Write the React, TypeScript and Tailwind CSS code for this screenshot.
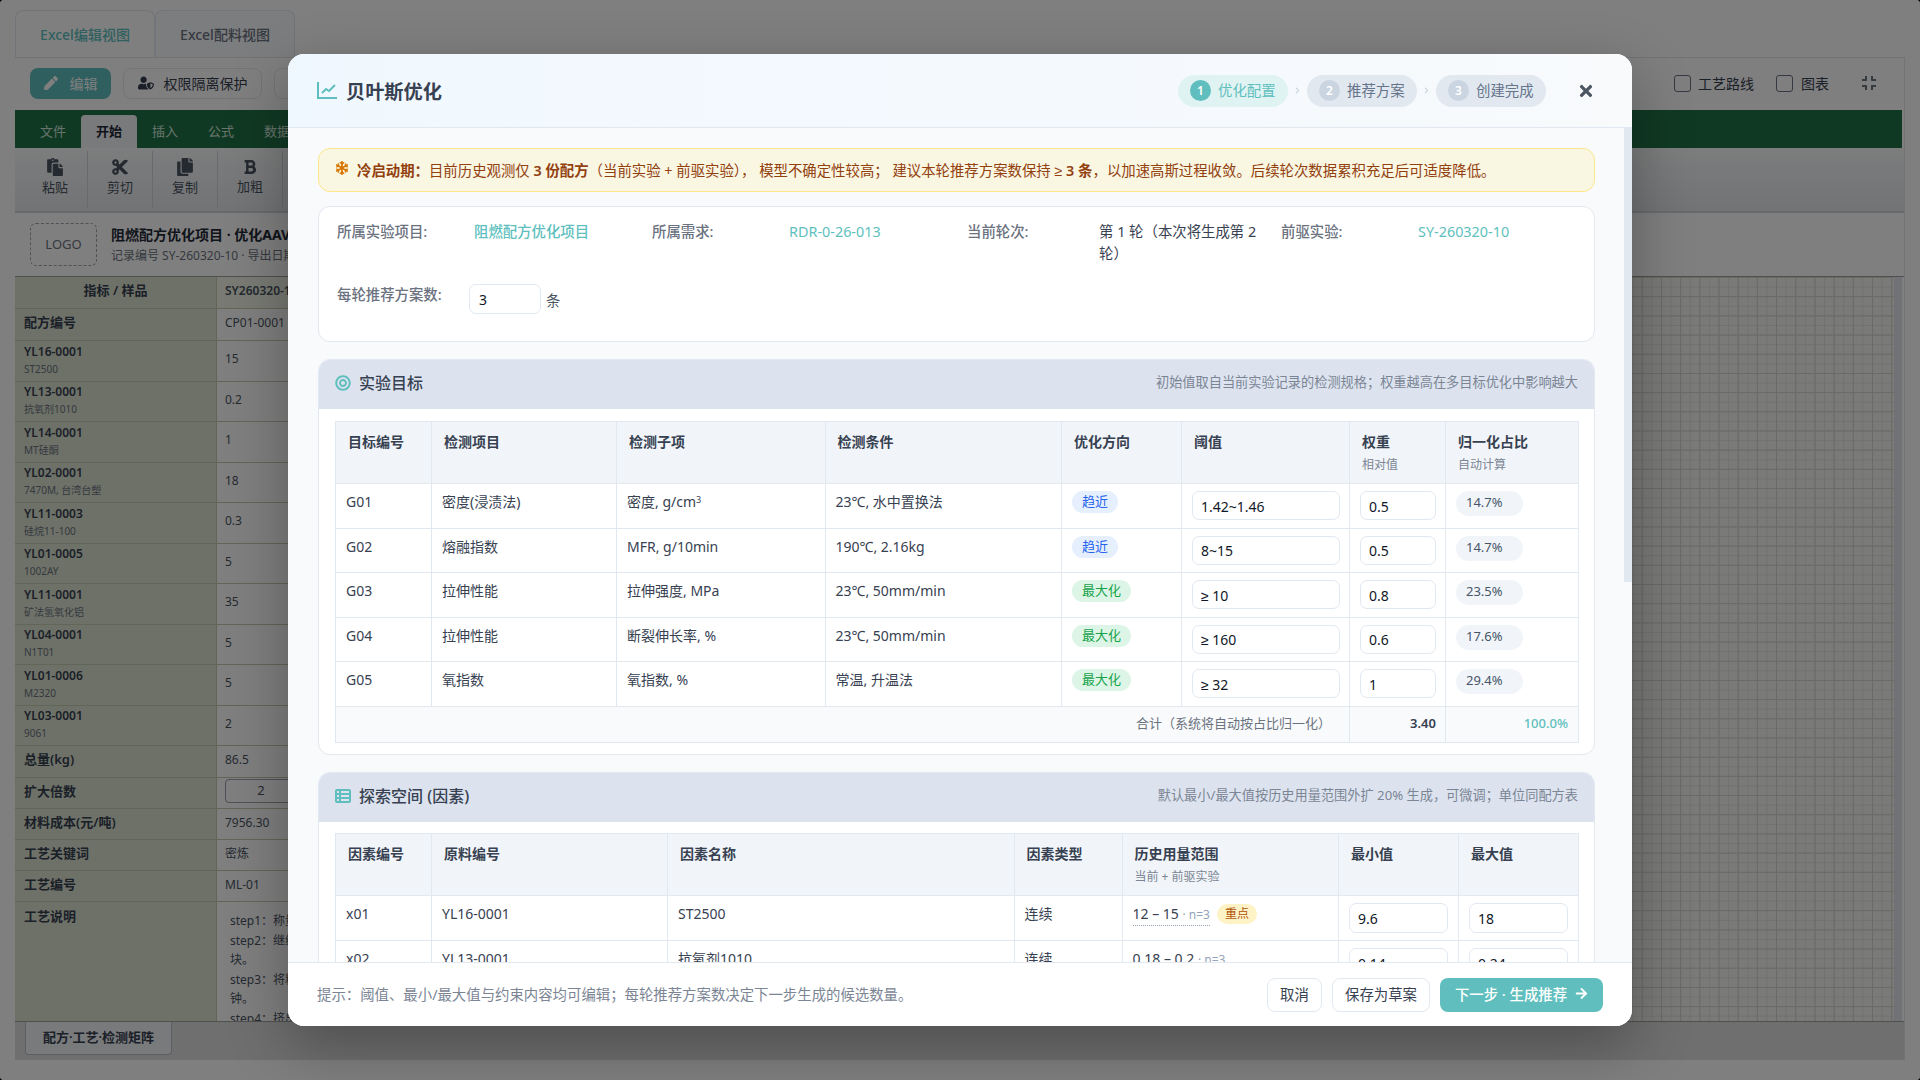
import React from "react";
import { FaPen, FaUserShield, FaPaste, FaCut, FaCopy, FaBold, FaCompress, FaSnowflake, FaBullseye, FaArrowRight, FaTimes, FaChevronRight } from "react-icons/fa";
import { FaTableList } from "react-icons/fa6";

const materials = [
  ["YL16-0001", "ST2500", "15"],
  ["YL13-0001", "抗氧剂1010", "0.2"],
  ["YL14-0001", "MT硅酮", "1"],
  ["YL02-0001", "7470M, 台湾台塑", "18"],
  ["YL11-0003", "硅烷11-100", "0.3"],
  ["YL01-0005", "1002AY", "5"],
  ["YL11-0001", "矿法氢氧化铝", "35"],
  ["YL04-0001", "N1T01", "5"],
  ["YL01-0006", "M2320", "5"],
  ["YL03-0001", "9061", "2"],
];

const goals = [
  ["G01", "密度(浸渍法)", "密度, g/cm", "23℃, 水中置换法", "趋近", "1.42~1.46", "0.5", "14.7%"],
  ["G02", "熔融指数", "MFR, g/10min", "190℃, 2.16kg", "趋近", "8~15", "0.5", "14.7%"],
  ["G03", "拉伸性能", "拉伸强度, MPa", "23℃, 50mm/min", "最大化", "≥ 10", "0.8", "23.5%"],
  ["G04", "拉伸性能", "断裂伸长率, %", "23℃, 50mm/min", "最大化", "≥ 160", "0.6", "17.6%"],
  ["G05", "氧指数", "氧指数, %", "常温, 升温法", "最大化", "≥ 32", "1", "29.4%"],
];

function Field({ value, className }: { value: string; className: string }) {
  return (
    <input
      readOnly
      value={value}
      className={`block rounded-[7px] border border-[#e2e8f0] bg-white px-2 pt-[1px] text-[14px] text-[#111827] outline-none ${className}`}
    />
  );
}

function Step({ n, label, active }: { n: number; label: string; active?: boolean }) {
  return (
    <div className={`flex h-8 w-[110px] items-center gap-[7px] rounded-full pl-3 ${active ? "bg-[#e0f3f3]" : "bg-[#e2e8f0]"}`}>
      <span className={`flex h-[21px] w-[21px] items-center justify-center rounded-full text-[12px] font-semibold text-white ${active ? "bg-[#60bfbe]" : "bg-[#cbd5e1]"}`}>{n}</span>
      <span className={`pt-[1px] text-[14.4px] ${active ? "text-[#60bfbe]" : "text-[#64748b]"}`}>{label}</span>
    </div>
  );
}

function Th({ title, sub }: { title: string; sub?: string }) {
  return (
    <th className="border border-[#e2e8f0] bg-[#f1f5f9] px-3 pt-[9px] text-left align-top font-normal">
      <div className="text-[14px] leading-[22px] font-semibold text-[#374151]">{title}</div>
      {sub && <div className="text-[12px] leading-[24px] text-[#7b8594]">{sub}</div>}
    </th>
  );
}

function Td({ children }: { children: React.ReactNode }) {
  return <td className="border border-[#e2e8f0] px-[10px] pt-[7px] align-top text-[14px] leading-[21px] text-[#374151]">{children}</td>;
}

function SectionHead({ icon, title, note }: { icon: React.ReactNode; title: string; note: string }) {
  return (
    <div className="flex h-[49px] items-center justify-between bg-[#dce3ef] px-4 pb-[3px]">
      <div className="flex items-center gap-2 text-[16px] font-medium text-[#374151]">
        {icon}
        <span>{title}</span>
      </div>
      <span className="text-[13.2px] text-[#7b8594]">{note}</span>
    </div>
  );
}

function Background() {
  const rowLine = "flex border-b border-[#c3ccb2]";
  const label = "flex w-[202px] shrink-0 flex-col justify-center border-r border-[#c3ccb2] bg-[#dce3d0] px-[9px] pb-[3px] text-[13px] font-semibold text-[#374151]";
  const value = "flex w-[120px] shrink-0 items-center px-2 pb-[3px] text-[12px] text-[#4b5563]";
  return (
    <div className="flex h-full flex-col pl-[15px] pr-[15px] pt-[10px] pb-5">
      <div className="flex h-[47px] shrink-0">
        <div className="flex w-[140px] items-center justify-center rounded-t-lg border border-b-0 border-[#e2e8f0] text-[14px] font-medium text-[#60bfbe]">Excel编辑视图</div>
        <div className="flex w-[140px] items-center justify-center rounded-t-lg border border-b-0 border-[#e2e8f0] bg-[#f8fafc] text-[14px] font-medium text-[#6b7280]">Excel配料视图</div>
      </div>
      <div className="flex min-h-0 flex-1 flex-col border-t border-r border-[#e5e7eb] bg-white">
        <div className="flex h-[52px] shrink-0 items-center px-[15px] pb-[2px]">
          <div className="flex h-[31px] w-[81px] items-center justify-center gap-3 rounded-lg bg-[#60bfbe] text-[14px] text-white"><FaPen size={14} />编辑</div>
          <div className="ml-3 flex h-[31px] w-[139px] items-center justify-center gap-[10px] rounded-lg border border-[#e2e8f0] text-[14px] text-[#374151]"><FaUserShield size={16} />权限隔离保护</div>
          <div className="ml-3 h-[31px] w-[100px] rounded-lg border border-[#e2e8f0]" />
          <div className="flex-1" />
          <div className="mr-[7px] h-[17px] w-[17px] rounded-[3px] border border-[#6b7280] bg-white" />
          <span className="text-[14px] text-[#374151]">工艺路线</span>
          <div className="ml-[22px] mr-2 h-[17px] w-[17px] rounded-[3px] border border-[#6b7280] bg-white" />
          <span className="text-[14px] text-[#374151]">图表</span>
          <FaCompress size={16} className="ml-[32px] mr-[12px] text-[#6b7280]" />
        </div>
        <div className="flex h-[38px] w-[1887px] shrink-0 items-end bg-[#217346] pl-[10px] text-[13px] text-[#d1e7da]">
          {["文件", "开始", "插入", "公式", "数据"].map((t) => (
            <div key={t} className={`flex h-[33px] w-14 items-center justify-center rounded-t ${t === "开始" ? "bg-[#f3f4f6] font-semibold text-[#1f2937]" : ""}`}>{t}</div>
          ))}
        </div>
        <div className="flex h-[65px] shrink-0 items-center border-b-2 border-[#d1d5db] bg-gradient-to-b from-[#f9fafb] to-[#e5e7eb] pl-2">
          {[[<FaPaste size={18} />, "粘贴"], [<FaCut size={18} />, "剪切"], [<FaCopy size={18} />, "复制"], [<FaBold size={16} />, "加粗"]].map(([ic, t], i) => (
            <div key={i} className="flex h-[57px] w-[65px] flex-col items-center justify-center gap-[2px] border-r border-[#d1d5db] pb-[3px] text-[13px] text-[#4b5563]">
              {ic}
              <span>{t}</span>
            </div>
          ))}
        </div>
        <div className="flex h-[63px] shrink-0 items-center gap-[14px] px-[15px]">
          <div className="flex h-[43px] w-[67px] items-center justify-center rounded-md border border-dashed border-[#9ca3af] text-[13px] text-[#6b7280]">LOGO</div>
          <div>
            <div className="text-[14px] leading-[22px] font-bold text-[#1f2937]">阻燃配方优化项目 · 优化AAV方案配方</div>
            <div className="text-[12px] leading-[20px] text-[#6b7280]">记录编号 SY-260320-10 · 导出日期 2026-03-20</div>
          </div>
        </div>
        <div className="flex min-h-0 flex-1 border-t border-[#9ca39a]">
          <div className="flex w-[322px] shrink-0 flex-col text-[#374151]">
            <div className={`${rowLine} h-[32px]`}><div className={`${label} items-center`}>指标 / 样品</div><div className={`${value} bg-[#f1f5e6] font-semibold`}>SY260320-10</div></div>
            <div className={`${rowLine} h-[32px]`}><div className={label}>配方编号</div><div className={value}>CP01-0001</div></div>
            {materials.map(([a, b, c]) => (
              <div key={a} className={`${rowLine} h-[40.5px]`}>
                <div className={label}><span className="text-[12px] leading-[17px]">{a}</span><span className="mt-[3px] text-[10px] leading-[13px] font-normal text-[#6b7280]">{b}</span></div>
                <div className={value}>{c}</div>
              </div>
            ))}
            <div className={`${rowLine} h-[31.5px]`}><div className={label}>总量(kg)</div><div className={value}>86.5</div></div>
            <div className={`${rowLine} h-[31.5px]`}><div className={label}>扩大倍数</div><div className={value}><div className="h-6 w-[72px] shrink-0 rounded border border-[#9ca3af] pt-[1px] text-center text-[13px]">2</div></div></div>
            <div className={`${rowLine} h-[31px]`}><div className={label}>材料成本(元/吨)</div><div className={value}>7956.30</div></div>
            <div className={`${rowLine} h-[31px]`}><div className={label}>工艺关键词</div><div className={value}>密炼</div></div>
            <div className={`${rowLine} h-[31px]`}><div className={label}>工艺编号</div><div className={value}>ML-01</div></div>
            <div className="flex min-h-0 flex-1 overflow-hidden">
              <div className={`${label} justify-start pt-[5px]`}>工艺说明</div>
              <div className="w-[120px] shrink-0 pl-[13px] pt-[9px] text-[12px] leading-[19.5px] text-[#4b5563]">step1：称量<br />step2：继续<br />块。<br />step3：将料<br />钟。<br />step4：挤出</div>
            </div>
          </div>
          <div className="min-w-0 flex-1 bg-[#f4f4f2] [background-image:linear-gradient(#d4d5cd_1px,transparent_1px),linear-gradient(90deg,#d4d5cd_1px,transparent_1px),linear-gradient(#e3e4de_1px,transparent_1px),linear-gradient(90deg,#e3e4de_1px,transparent_1px)] [background-size:19.2px_19.2px,19.2px_19.2px,9.6px_9.6px,9.6px_9.6px]" />
          <div className="w-2 shrink-0 bg-[#e2e5ea]" />
          <div className="w-[2px] shrink-0" />
        </div>
        <div className="flex h-[39px] shrink-0 border-t border-[#9ca39a] bg-[#dedede] pl-[10px]">
          <div className="flex h-[33px] w-[147px] items-center justify-center rounded-b border border-t-0 border-[#b9bdc4] bg-[#f3f4f6] text-[13px] font-semibold text-[#374151]">配方·工艺·检测矩阵</div>
        </div>
      </div>
    </div>
  );
}

export default function App() {
  return (
    <div className="h-screen overflow-hidden bg-black [font-family:'Noto_Sans','Liberation_Sans','Noto_Sans_CJK_SC',sans-serif]">
      <div className="relative h-full overflow-hidden rounded-[4px] bg-white">
        <Background />
        <div className="absolute inset-0 flex items-center justify-center bg-black/50">
          <div className="flex h-[972px] w-[1344px] flex-col overflow-hidden rounded-2xl bg-white shadow-[0_20px_60px_rgba(0,0,0,0.3)]">
            <div className="flex h-[74px] shrink-0 items-center border-b border-[#e2e8f0] bg-gradient-to-r from-[#f0f8ff] to-[#f8fafc] pl-[29px] pr-[37px]">
              <svg width="20" height="17" viewBox="0 0 20 17" fill="none" stroke="#60bfbe" strokeWidth="2" className="mr-[9px]">
                <path d="M1 0v16h19" />
                <path d="M5 11l4-4 3 2 6-6" />
              </svg>
              <h2 className="flex-1 pt-1 text-[19.2px] font-bold text-[#374151]">贝叶斯优化</h2>
              <Step n={1} label="优化配置" active />
              <FaChevronRight size={7} className="mx-[6px] text-[#cbd5e1]" />
              <Step n={2} label="推荐方案" />
              <FaChevronRight size={7} className="mx-[6px] text-[#cbd5e1]" />
              <Step n={3} label="创建完成" />
              <FaTimes size={18} className="ml-[31px] text-[#4b5563]" />
            </div>

            <div className="flex min-h-0 flex-1 bg-[#f8fafc]">
              <div className="min-w-0 flex-1 overflow-hidden pl-[30px] pr-[29px] pt-5">
                <div className="flex h-[44px] items-center rounded-xl border border-[#fde68a] bg-[#f9f6e2] pl-4 pt-[2px] text-[14.4px] text-[#92400e]">
                  <FaSnowflake size={14} className="mr-2 -mt-[7px] text-[#d97706]" />
                  <span><b className="font-semibold">冷启动期：</b>目前历史观测仅 <b className="font-semibold">3 份配方</b>（当前实验 + 前驱实验）， 模型不确定性较高； 建议本轮推荐方案数保持 ≥ <b className="font-semibold">3 条</b>，以加速高斯过程收敛。后续轮次数据累积充足后可适度降低。</span>
                </div>

                <div className="mt-[14px] h-[136px] rounded-xl border border-[#e2e8f0] bg-white pl-[18px] pt-[14px] text-[14.4px] leading-[22px]">
                  <div className="grid grid-cols-[121px_162px_121px_162px_116px_166px_121px_162px] gap-x-4">
                    <span className="font-medium text-[#6b7280]">所属实验项目:</span>
                    <span className="font-medium text-[#60bfbe]">阻燃配方优化项目</span>
                    <span className="font-medium text-[#6b7280]">所属需求:</span>
                    <span className="text-[#60bfbe]">RDR-0-26-013</span>
                    <span className="font-medium text-[#6b7280]">当前轮次:</span>
                    <span className="text-[#374151]">第 1 轮（本次将生成第 2 轮）</span>
                    <span className="font-medium text-[#6b7280]">前驱实验:</span>
                    <span className="text-[#60bfbe]">SY-260320-10</span>
                  </div>
                  <div className="mt-[19px] flex">
                    <span className="w-[132px] font-medium text-[#6b7280]">每轮推荐方案数:</span>
                    <input readOnly value="3" className="h-[30px] w-[72px] rounded-[7px] border border-[#e2e8f0] bg-white px-[9px] text-[14px] text-[#111827] outline-none" />
                    <span className="ml-[5px] mt-[6px] text-[#4b5563]">条</span>
                  </div>
                </div>

                <section className="mt-[17px] overflow-hidden rounded-xl border border-[#e2e8f0] bg-white">
                  <SectionHead
                    icon={<FaBullseye size={16} className="text-[#60bfbe]" />}
                    title="实验目标"
                    note="初始值取自当前实验记录的检测规格；权重越高在多目标优化中影响越大"
                  />
                  <div className="px-4 pb-[11px] pt-3">
                    <table className="w-[1243px] table-fixed border-collapse">
                      <colgroup>
                        <col className="w-[96px]" /><col className="w-[185px]" /><col className="w-[208.5px]" /><col className="w-[236.5px]" /><col className="w-[120px]" /><col className="w-[168px]" /><col className="w-[96px]" /><col className="w-[133px]" />
                      </colgroup>
                      <thead>
                        <tr className="h-[62px]">
                          <Th title="目标编号" /><Th title="检测项目" /><Th title="检测子项" /><Th title="检测条件" /><Th title="优化方向" /><Th title="阈值" /><Th title="权重" sub="相对值" /><Th title="归一化占比" sub="自动计算" />
                        </tr>
                      </thead>
                      <tbody>
                        {goals.map((g) => (
                          <tr key={g[0]} className="h-[44.6px]">
                            <Td>{g[0]}</Td>
                            <Td>{g[1]}</Td>
                            <Td>{g[2]}{g[0] === "G01" && <sup className="text-[9px]">3</sup>}</Td>
                            <Td>{g[3]}</Td>
                            <Td>
                              <span className={`block h-[22px] w-fit rounded-full px-[10px] text-[13px] leading-[20px] ${g[4] === "趋近" ? "bg-[#e6effe] text-[#2563eb]" : "bg-[#dcf5e6] text-[#16a34a]"}`}>{g[4]}</span>
                            </Td>
                            <Td><Field value={g[5]} className="h-[29px] w-[148px]" /></Td>
                            <Td><Field value={g[6]} className="h-[29px] w-[76px]" /></Td>
                            <Td>
                              <span className="block h-[25px] w-[67px] rounded-full bg-[#f1f5f9] pl-[10px] text-[13px] leading-[22px] text-[#475569]">{g[7]}</span>
                            </Td>
                          </tr>
                        ))}
                        <tr className="h-[36px] bg-[#f8fafc] text-[13px]">
                          <td colSpan={6} className="border border-[#e2e8f0] pr-[18px] pb-[2px] text-right text-[#6b7280]">合计（系统将自动按占比归一化）</td>
                          <td className="border border-[#e2e8f0] pr-[9px] pb-[2px] text-right font-semibold text-[#374151]">3.40</td>
                          <td className="border border-[#e2e8f0] pr-[10px] pb-[2px] text-right font-medium text-[#60bfbe]">100.0%</td>
                        </tr>
                      </tbody>
                    </table>
                  </div>
                </section>

                <section className="mt-[17px] overflow-hidden rounded-xl border border-[#e2e8f0] bg-white">
                  <SectionHead
                    icon={<FaTableList size={16} className="text-[#60bfbe]" />}
                    title="探索空间 (因素)"
                    note="默认最小/最大值按历史用量范围外扩 20% 生成，可微调；单位同配方表"
                  />
                  <div className="px-4 pb-3 pt-[11px]">
                    <table className="w-[1243px] table-fixed border-collapse">
                      <colgroup>
                        <col className="w-[96px]" /><col className="w-[236px]" /><col className="w-[346.5px]" /><col className="w-[108px]" /><col className="w-[216.5px]" /><col className="w-[120px]" /><col className="w-[120px]" />
                      </colgroup>
                      <thead>
                        <tr className="h-[62px]">
                          <Th title="因素编号" /><Th title="原料编号" /><Th title="因素名称" /><Th title="因素类型" /><Th title="历史用量范围" sub="当前 + 前驱实验" /><Th title="最小值" /><Th title="最大值" />
                        </tr>
                      </thead>
                      <tbody>
                        <tr className="h-[45px]">
                          <Td>x01</Td><Td>YL16-0001</Td><Td>ST2500</Td><Td>连续</Td>
                          <Td>
                            <span className="inline-flex items-center gap-[7px]">
                              <span className="border-b border-dotted border-[#94a3b8]">12 – 15 <span className="text-[12px] text-[#94a3b8]">· n=3</span></span>
                              <span className="h-5 rounded-full bg-[#fef3c7] px-2 text-[12px] leading-5 text-[#b45309]">重点</span>
                            </span>
                          </Td>
                          <Td><Field value="9.6" className="h-[30px] w-[99px]" /></Td>
                          <Td><Field value="18" className="h-[30px] w-[99px]" /></Td>
                        </tr>
                        <tr className="h-[45px]">
                          <Td>x02</Td><Td>YL13-0001</Td><Td>抗氧剂1010</Td><Td>连续</Td>
                          <Td><span className="border-b border-dotted border-[#94a3b8]">0.18 – 0.2 <span className="text-[12px] text-[#94a3b8]">· n=3</span></span></Td>
                          <Td><Field value="0.14" className="h-[30px] w-[99px]" /></Td>
                          <Td><Field value="0.24" className="h-[30px] w-[99px]" /></Td>
                        </tr>
                      </tbody>
                    </table>
                  </div>
                </section>
              </div>
              <div className="w-2 shrink-0">
                <div className="h-[454px] bg-[#e2e8f0]" />
              </div>
            </div>

            <div className="flex h-16 shrink-0 items-center justify-between border-t border-[#e2e8f0] bg-white pl-[29px] pr-[29px]">
              <span className="text-[14.4px] text-[#7b8594]">提示：阈值、最小/最大值与约束内容均可编辑；每轮推荐方案数决定下一步生成的候选数量。</span>
              <div className="flex items-center">
                <button className="h-[34px] w-[55px] rounded-lg border border-[#e2e8f0] bg-white pt-[1px] text-[14.4px] text-[#374151]">取消</button>
                <button className="ml-[10px] h-[34px] w-[98px] rounded-lg border border-[#e2e8f0] bg-white pt-[1px] text-[14.4px] text-[#374151]">保存为草案</button>
                <button className="ml-[10px] flex h-[34px] w-[163px] items-center justify-center gap-2 rounded-lg bg-[#60bfbe] pt-[1px] text-[14.4px] font-medium text-white">下一步 · 生成推荐<FaArrowRight size={13} className="-mt-[3px]" /></button>
              </div>
            </div>
          </div>
        </div>
      </div>
    </div>
  );
}
